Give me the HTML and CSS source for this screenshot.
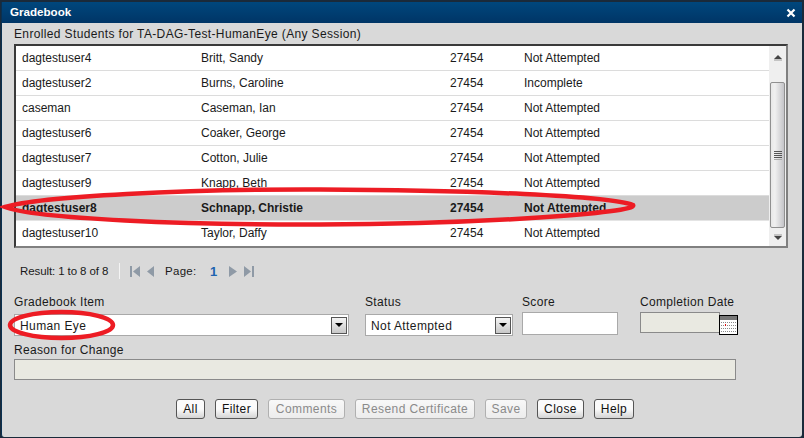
FILE: index.html
```html
<!DOCTYPE html>
<html lang="en">
<head>
<meta charset="utf-8">
<title>Gradebook</title>
<link rel="stylesheet" href="styles.css">
</head>
<body>
<div class="window">
  <header class="titlebar">
    <span class="title">Gradebook</span>
    <svg class="close-x" width="10" height="10" viewBox="0 0 10 10"><path d="M1.5 1.5l7 7M8.500 1.500l-7 7" stroke="#fff" stroke-width="2.200"/></svg>
  </header>
  <main class="content">
    <h1 class="heading">Enrolled Students for TA-DAG-Test-HumanEye (Any Session)</h1>
    <section class="list">
      <div class="rows">
        <div class="row"><span>dagtestuser4</span><span>Britt, Sandy</span><span>27454</span><span>Not Attempted</span></div>
        <div class="row"><span>dagtestuser2</span><span>Burns, Caroline</span><span>27454</span><span>Incomplete</span></div>
        <div class="row"><span>caseman</span><span>Caseman, Ian</span><span>27454</span><span>Not Attempted</span></div>
        <div class="row"><span>dagtestuser6</span><span>Coaker, George</span><span>27454</span><span>Not Attempted</span></div>
        <div class="row"><span>dagtestuser7</span><span>Cotton, Julie</span><span>27454</span><span>Not Attempted</span></div>
        <div class="row"><span>dagtestuser9</span><span>Knapp, Beth</span><span>27454</span><span>Not Attempted</span></div>
        <div class="row selected"><span>dagtestuser8</span><span>Schnapp, Christie</span><span>27454</span><span>Not Attempted</span></div>
        <div class="row last"><span>dagtestuser10</span><span>Taylor, Daffy</span><span>27454</span><span>Not Attempted</span></div>
      </div>
      <div class="scrollbar">
        <svg class="arrow" width="16" height="12" viewBox="0 0 16 12"><path d="M8 3l4 4H4z" fill="#444"/><path d="M4 8h8" stroke="#999"/></svg>
        <div class="thumb">
          <svg width="8" height="9" viewBox="0 0 8 9"><path d="M0 .5h8M0 2.500h8M0 4.500h8M0 6.500h8" stroke="#555"/><path d="M0 8.500h8" stroke="#aaa"/></svg>
        </div>
        <svg class="arrow" width="16" height="12" viewBox="0 0 16 12"><path d="M4 4h8" stroke="#999"/><path d="M8 9L4 5h8z" fill="#444"/></svg>
      </div>
    </section>
    <nav class="pager">
      <span class="result">Result: 1 to 8 of 8</span>
      <span class="sep"></span>
      <svg class="nav-icon" width="26" height="11" viewBox="0 0 26 11"><path d="M1 0h2v11H1zM11 0v11L4 5.500zM25 0v11L18 5.500z" fill="#8f9aa6"/></svg>
      <span class="page-label">Page:</span>
      <span class="page-num">1</span>
      <svg class="nav-icon" width="26" height="11" viewBox="0 0 26 11"><path d="M0 0v11l8-5.500zM15 0v11l7-5.500zM23 0h2v11h-2z" fill="#8f9aa6"/></svg>
    </nav>
    <form class="form">
      <div class="fields">
        <label class="field f-item"><span class="lbl">Gradebook Item</span>
          <span class="select"><span class="select-text">Human Eye</span><span class="select-btn"><svg width="8" height="4" viewBox="0 0 8 4"><path d="M0 0h8L4 4z" fill="#000"/></svg></span></span>
        </label>
        <label class="field f-status"><span class="lbl">Status</span>
          <span class="select"><span class="select-text">Not Attempted</span><span class="select-btn"><svg width="8" height="4" viewBox="0 0 8 4"><path d="M0 0h8L4 4z" fill="#000"/></svg></span></span>
        </label>
        <label class="field f-score"><span class="lbl">Score</span><span class="score-input"></span></label>
        <div class="field f-date"><span class="lbl">Completion Date</span>
          <div class="date-row"><span class="date-input"></span>
            <svg class="cal" width="19" height="20" viewBox="0 0 19 20"><rect x=".5" y=".5" width="18" height="19" fill="#fff" stroke="#000"/><rect x="1" y="1" width="17" height="4" fill="#777"/><path d="M2 7.500h15M2 10.500h15M2 13.500h15M2 16.500h15" stroke="#888" stroke-dasharray="1 1"/><rect x="6" y="9" width="1" height="2" fill="#d11"/></svg>
          </div>
        </div>
      </div>
      <div class="reason">
        <span class="lbl">Reason for Change</span>
        <span class="reason-input"></span>
      </div>
      <div class="buttons">
        <button type="button" class="btn">All</button>
        <button type="button" class="btn">Filter</button>
        <button type="button" class="btn off">Comments</button>
        <button type="button" class="btn off">Resend Certificate</button>
        <button type="button" class="btn off">Save</button>
        <button type="button" class="btn">Close</button>
        <button type="button" class="btn">Help</button>
      </div>
    </form>
  </main>
</div>
<svg class="marks" width="804" height="438" viewBox="0 0 804 438">
  <path d="M5 207C40 196 190 189 320 189.500C470 190 610 196 633 205C640 213 480 224 320 224.500C190 225 35 219 5 207Z" fill="none" stroke="#ed1c24" stroke-width="4.500"/>
  <ellipse cx="61.500" cy="325" rx="51.500" ry="13" fill="none" stroke="#ed1c24" stroke-width="4.500"/>
</svg>
</body>
</html>
```
FILE: styles.css
```css
* { box-sizing: border-box; }
html, body { margin: 0; padding: 0; }
body {
  width: 804px; height: 438px; overflow: hidden; position: relative;
  background: #1a2a3a;
  font-family: "Liberation Sans", Arial, sans-serif;
  font-size: 12px; color: #1a1a1a;
  padding: 2px 2px 1px 1px;
}
.window {
  height: 435px;
  display: flex; flex-direction: column;
  background: #d9d9d9;
  border-left: 1px solid #0a3050;
  border-radius: 0 0 3px 3px;
  overflow: hidden;
}
.titlebar {
  height: 21px; flex: none;
  display: flex; align-items: center; justify-content: space-between;
  padding: 0 6px 2px 8px;
  background: linear-gradient(#00477d, #003566);
  color: #fff;
}
.title { font-weight: bold; font-size: 11.600px; }
.close-x { display: block; margin-top: 2px; }
.content { flex: 1; padding: 4px 0 0 12px; display: flex; flex-direction: column; }
.heading { margin: 0 0 2px 0; font-weight: normal; font-size: 12px; line-height: 15px; letter-spacing: .36px; }
.list {
  width: 774px; height: 204px; flex: none;
  display: flex;
  border-top: 2px solid #3a3a3a;
  border-left: 2px solid #3a3a3a;
  border-right: 2px solid #808080;
  border-bottom: 2px solid #808080;
  background: #fff;
}
.rows { width: 753px; flex: none; }
.row {
  height: 25px;
  display: grid; grid-template-columns: 179px 249px 74px 1fr;
  align-items: center;
  padding-left: 6px;
  border-bottom: 1px solid #dcdcdc;
  font-size: 12px;
}
.row span { white-space: nowrap; }
.row.selected { background: #cccccc; font-weight: bold; border-color: #e4e4e4; }
.row.last { border-bottom-color: #fff; }
.scrollbar {
  width: 17px; flex: none; background: #efefef;
  display: flex; flex-direction: column; align-items: center;
}
.arrow { flex: none; margin: 6px 0 0; display: block; }
.scrollbar .arrow:last-child { margin: 3px 0 3px; }
.thumb {
  flex: 1; width: 15px; margin-top: 18px;
  border: 1px solid #909090; border-radius: 2px;
  background: linear-gradient(90deg, #e8e8e8, #f0f0f0 30%, #c4c4c8);
  display: flex; align-items: center; justify-content: center;
}
.pager {
  height: 24px; margin-top: 11px; padding-left: 6px;
  display: flex; align-items: center;
  font-size: 11.500px; flex: none;
}
.result { width: 99px; letter-spacing: -.1px; }
.sep { width: 1px; height: 16px; background: #f4f4f4; margin-right: 9px; }
.nav-icon { display: block; }
.page-label { margin-left: 10px; width: 45px; letter-spacing: .3px; }
.page-num { color: #1f64b0; font-weight: bold; font-size: 13px; width: 19px; }
.form { display: flex; flex-direction: column; margin-top: 12px; }
.lbl { display: block; line-height: 15px; letter-spacing: .33px; font-size: 12px; white-space: nowrap; }
.fields { display: flex; height: 48px; }
.field { display: block; flex: none; }
.f-item { width: 351px; }
.f-status { width: 157px; }
.f-score { width: 118px; }
.f-date { width: 110px; }
.select {
  display: flex; align-items: center; justify-content: space-between;
  height: 22px; margin-top: 4px;
  border: 1px solid #a9a9a9; background: #fff;
  padding: 0 1px 0 5px;
}
.f-item .select { width: 335px; }
.f-status .select { width: 148px; }
.select-text { letter-spacing: .4px; padding-top: 1px; }
.select-btn {
  width: 16px; height: 17px; border: 1px solid #555;
  background: linear-gradient(#f4f4f4, #c8c8c8);
  display: flex; align-items: center; justify-content: center;
}
.select-btn svg { display: block; }
.score-input { display: block; width: 96px; height: 23px; margin-top: 2px; background: #fff; border: 1px solid #a9a9a9; }
.date-row { display: flex; margin-top: 2px; align-items: flex-start; }
.date-input { display: block; width: 80px; height: 21px; background: #e9e9e1; border: 1px solid #8a8a8a; }
.cal { display: block; margin: 3px 0 0 -1px; }
.reason { height: 56px; }
.reason-input { display: block; margin-top: 1px; width: 722px; height: 21px; background: #e9e9e1; border: 1px solid #8a8a8a; }
.buttons {
  display: grid; grid-template-columns: 29px 43px 77px 120px 42px 47px 40px;
  gap: 10px; margin-left: 162px; height: 20px;
}
.btn {
  height: 20px; padding: 0; margin: 0;
  font: 12px "Liberation Sans", Arial, sans-serif; letter-spacing: .42px;
  color: #111; border: 1px solid #555; border-radius: 3px;
  background: linear-gradient(#fbfbfb 50%, #d4d4d4);
}
.btn.off { color: #8a8a8a; border-color: #b0b0b0; background: linear-gradient(#f8f8f8, #ececec); }
.marks { position: absolute; left: 0; top: 0; pointer-events: none; }
```
